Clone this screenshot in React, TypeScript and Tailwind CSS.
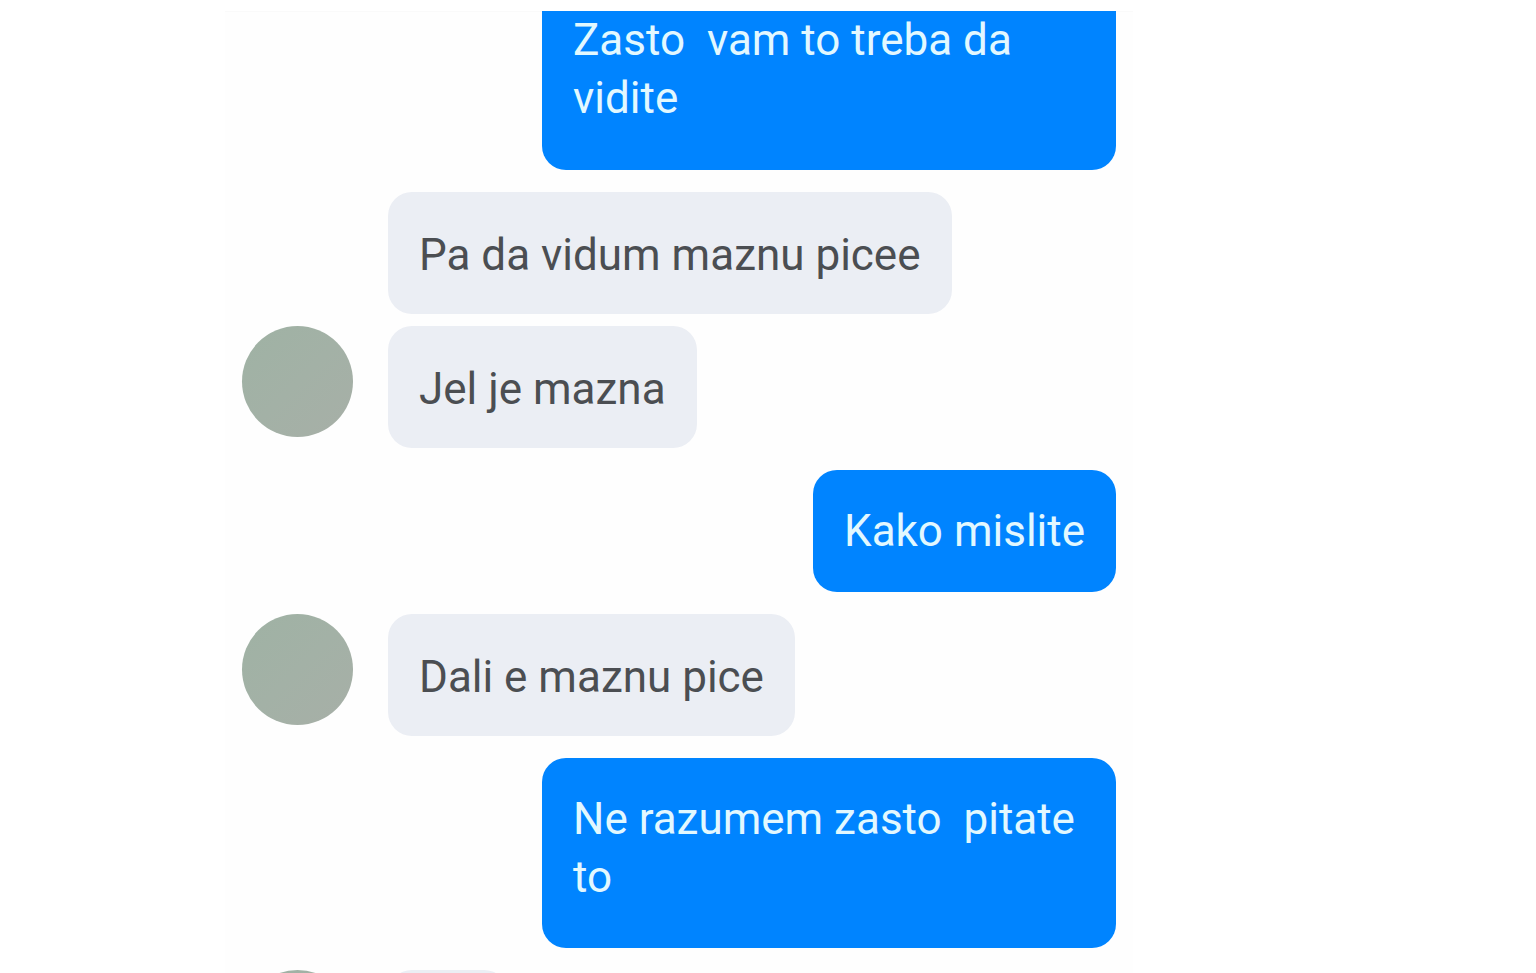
import clsx from "clsx";

type Message = {
  id: number;
  from: "me" | "them";
  text: string;
  avatar?: boolean;
  grouped?: boolean; // sits close to the message above it
  long?: boolean;
};

const messages: Message[] = [
  { id: 2, from: "them", text: "Pa da vidum maznu picee" },
  { id: 3, from: "them", text: "Jel je mazna", avatar: true, grouped: true },
  { id: 4, from: "me", text: "Kako mislite" },
  { id: 5, from: "them", text: "Dali e maznu pice", avatar: true },
  { id: 6, from: "me", text: "Ne razumem zasto  pitate to", long: true },
];

function Avatar() {
  return (
    <div className="size-[111px] rounded-full bg-linear-to-br from-[#9fb2a4] via-[#a3b1a6] to-[#a7afa7]" />
  );
}

function MessageRow({ message }: { message: Message }) {
  const mine = message.from === "me";

  return (
    <li className={clsx("flex", message.grouped ? "mt-3" : "mt-[22px]", mine && "justify-end")}>
      {!mine && <div className="w-[146px] shrink-0">{message.avatar ? <Avatar /> : null}</div>}
      <p
        className={clsx(
          "max-w-[574px] rounded-3xl px-[31px] whitespace-pre-wrap",
          mine ? "bg-[#0084ff] pt-8 text-[#e2f8ff]" : "bg-[#ebeef4] pt-[34px] text-[#4b4e52]",
          mine ? (message.long ? "pb-[42px]" : "pb-8") : "pb-[30px]"
        )}
      >
        {message.text}
      </p>
    </li>
  );
}

export default function App() {
  return (
    <div className="h-screen overflow-hidden bg-white pt-[11px] pl-[225px] font-['Roboto',sans-serif] text-[44px] leading-[58px]">
      <main className="max-w-[908px] border-t border-[#fafafa] bg-[#fefefe] px-[17px]">
        {/* oldest message, cut off by the top of the scroll area */}
        <div className="-mt-px flex justify-end">
          <p className="max-w-[574px] rounded-b-3xl bg-[#0084ff] px-[31px] pb-[43px] whitespace-pre-wrap text-[#e2f8ff]">
            Zasto  vam to treba da vidite
          </p>
        </div>
        <ul>
          {messages.map((m) => (
            <MessageRow key={m.id} message={m} />
          ))}
          {/* next message is just starting to scroll in */}
          <li className="mt-[22px] flex">
            <div className="w-[146px] shrink-0">
              <Avatar />
            </div>
            <div className="h-[122px] w-[120px] rounded-3xl bg-[#ebeef4]" />
          </li>
        </ul>
      </main>
    </div>
  );
}
